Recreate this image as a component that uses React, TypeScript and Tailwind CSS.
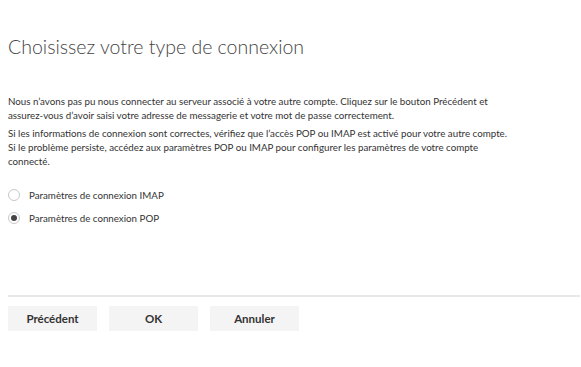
export default function App() {
  return (
    <div
      className="w-[581px] h-[367px] bg-white text-[#333] px-2"
      style={{ fontFamily: 'Lato, "Liberation Sans", sans-serif' }}
    >
      <h1 className="pt-[34px] text-[19.5px] leading-[26px] font-light text-[#444] whitespace-nowrap">
        Choisissez votre type de connexion
      </h1>

      <div className="mt-[34px] text-[9.75px] leading-[14px] whitespace-nowrap">
        <p>
          Nous n’avons pas pu nous connecter au serveur associé à votre autre compte. Cliquez sur le bouton Précédent et
          <br />
          assurez-vous d’avoir saisi votre adresse de messagerie et votre mot de passe correctement.
        </p>
        <p className="mt-[4px]">
          Si les informations de connexion sont correctes, vérifiez que l’accès POP ou IMAP est activé pour votre autre compte.
          <br />
          Si le problème persiste, accédez aux paramètres POP ou IMAP pour configurer les paramètres de votre compte
          <br />
          connecté.
        </p>
      </div>

      <div className="mt-[20px] flex flex-col gap-[9px] text-[9.75px]">
        <label className="flex items-center gap-[9px] h-[14px]">
          <span className="w-[12px] h-[12px] rounded-full border border-[#c8c8c8] bg-white" />
          Paramètres de connexion IMAP
        </label>
        <label className="flex items-center gap-[9px] h-[14px]">
          <span className="w-[12px] h-[12px] rounded-full border border-[#c8c8c8] bg-white flex items-center justify-center">
            <span className="w-[6px] h-[6px] rounded-full bg-[#444]" />
          </span>
          Paramètres de connexion POP
        </label>
      </div>

      <div className="mt-[70px] h-[2px] bg-[#e8e8e8] mr-[-7px]" />

      <div className="mt-[9px] flex gap-[12px]">
        {['Précédent', 'OK', 'Annuler'].map((b) => (
          <button
            key={b}
            className="w-[89px] h-[25px] bg-[#f4f4f4] text-[11.5px] font-bold text-[#333]"
          >
            {b}
          </button>
        ))}
      </div>
    </div>
  );
}
